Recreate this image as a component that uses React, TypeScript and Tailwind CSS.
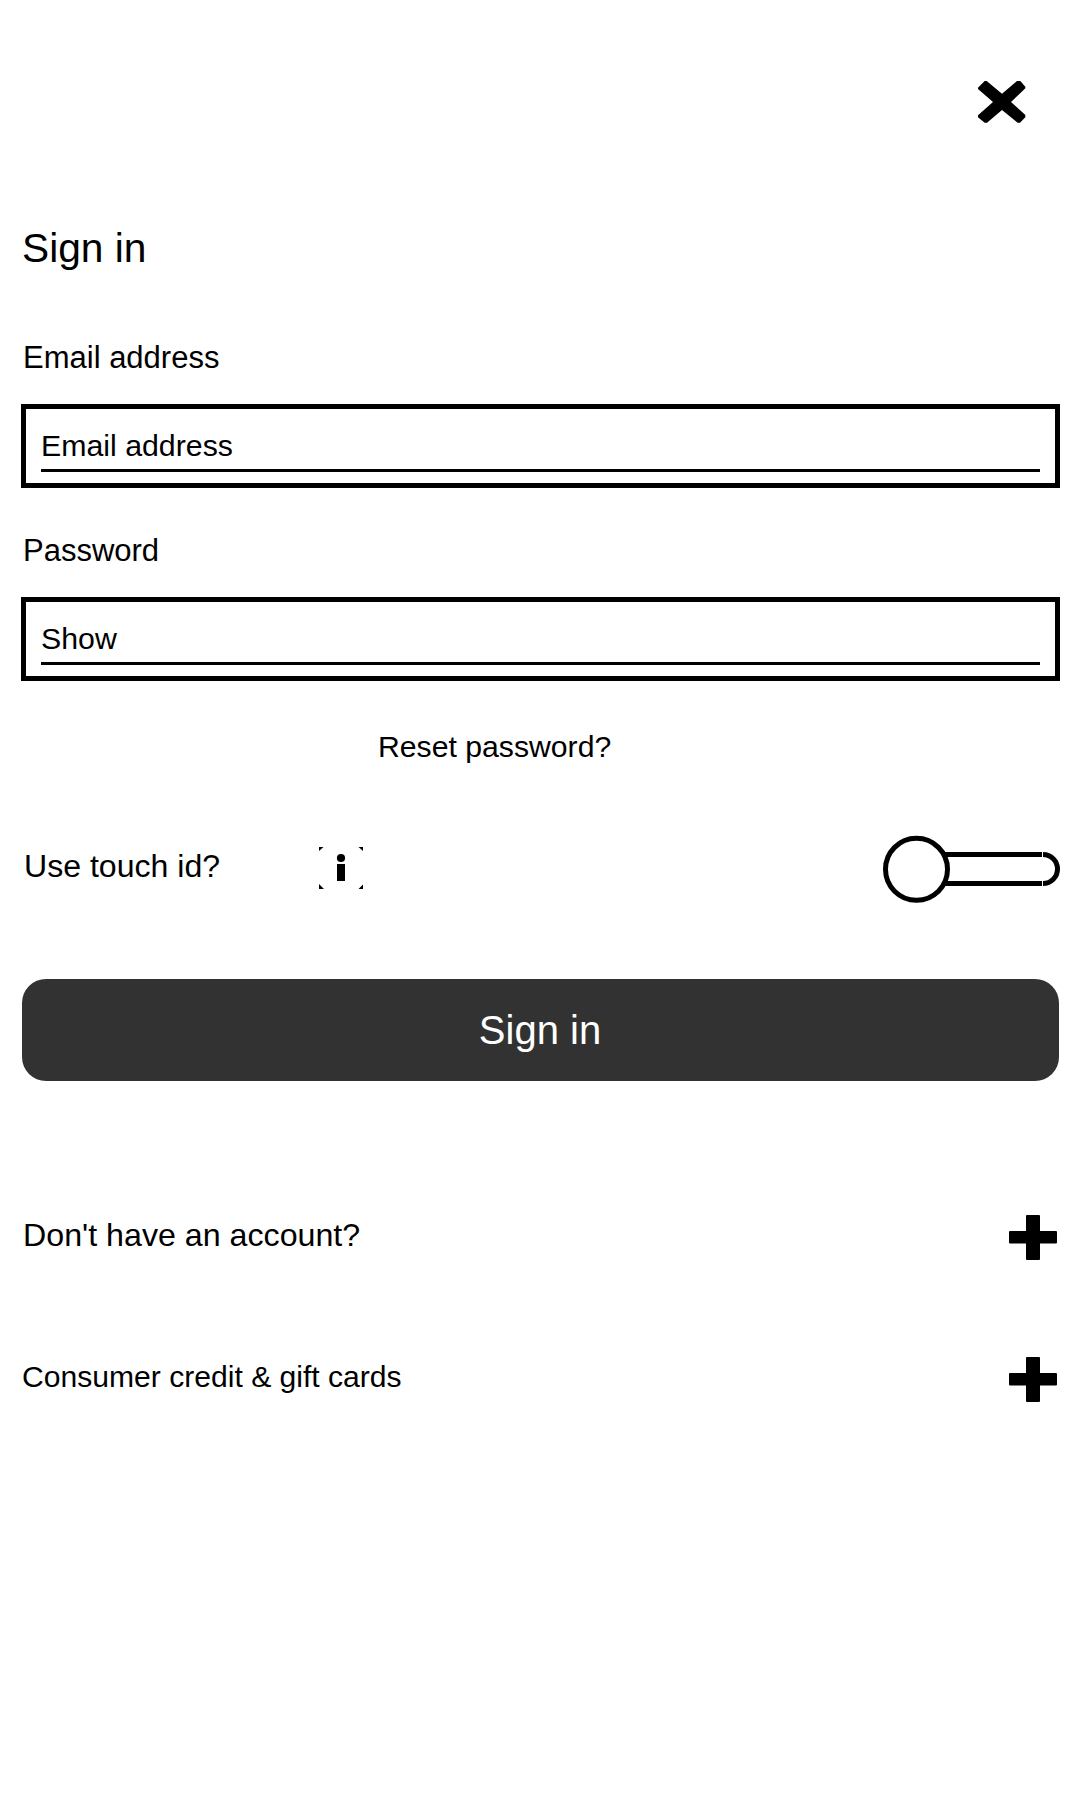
import { useId } from "react";

function CloseIcon() {
  return (
    <svg width="48" height="42" viewBox="53 63 144 126" aria-hidden="true">
      <path d="M53 83L73 63H79L125 101L170 63H180L195 80V85L152 126L195 165V172L179 188H172L125 150L80 188H73L53 172V166L98 126L53 87Z" />
    </svg>
  );
}

function PlusIcon() {
  return (
    <svg width="48" height="45" viewBox="0 0 48 45" aria-hidden="true">
      <rect x="17" width="14" height="45" rx="1" />
      <rect y="16" width="48" height="12.5" rx="1" />
    </svg>
  );
}

function InfoIcon() {
  return (
    <svg width="44" height="42" viewBox="0 0 44 42" aria-hidden="true">
      <path d="M0 0H4.5L0 4ZM44 0H39.5L44 4ZM0 42H5L0 37ZM44 42H39.5L44 37.5Z" />
      <circle cx="22" cy="11" r="4.1" />
      <rect x="18" y="17" width="8" height="17" />
    </svg>
  );
}

function TouchToggle() {
  return (
    <svg width="177" height="68" viewBox="0 0 177 68" fill="none" stroke="black" strokeWidth="5" aria-hidden="true">
      <path d="M62 19.5H159M62 48.5H159" />
      <path d="M160 19.5A14.5 14.5 0 0 1 160 48.5" />
      <circle cx="33.5" cy="34.3" r="31" fill="white" />
    </svg>
  );
}

function Field({ label, placeholder, type }: { label: string; placeholder: string; type: string }) {
  const id = useId();
  return (
    <div className="h-[193px]">
      <label htmlFor={id} className="block h-[67px] pt-px pl-[2px] text-[31px] leading-10">
        {label}
      </label>
      <div className="h-[84px] border-[5px] border-black px-[15px]">
        <input
          id={id}
          type={type}
          placeholder={placeholder}
          className="block h-[63px] w-full border-b-[3px] border-black pt-[13px] text-[30.3px] outline-none placeholder:text-black"
        />
      </div>
    </div>
  );
}

export default function App() {
  return (
    <main className="flex h-[1800px] w-[1080px] flex-col bg-white pr-5 pl-[21px] font-['Liberation_Sans',Arial,sans-serif] text-black">
      <header className="flex h-[223px] justify-end pt-[81px] pr-[34px]">
        <button className="h-[42px]" aria-label="Close">
          <CloseIcon />
        </button>
      </header>
      <h1 className="h-[114px] pl-px text-[40.7px] leading-[50px]">Sign in</h1>
      <Field label="Email address" placeholder="Email address" type="email" />
      <Field label="Password" placeholder="Show" type="password" />
      <a className="ml-[357px] h-[112px] pt-[4px] text-[30.2px] leading-10">Reset password?</a>
      <div className="flex h-[144px]">
        <span className="w-[298px] pt-[11px] pl-[3px] text-[32.1px] leading-10">Use touch id?</span>
        <span className="pt-[12px]">
          <InfoIcon />
        </span>
        <span className="ml-auto">
          <TouchToggle />
        </span>
      </div>
      <button className="mr-px ml-px h-[102px] rounded-3xl bg-[#323232] pr-px text-[40px] leading-[50px] text-white">
        Sign in
      </button>
      <div className="mt-[134px] flex h-[142px] justify-between pr-[3px]">
        <span className="pl-[2px] text-[32.2px] leading-10">Don't have an account?</span>
        <PlusIcon />
      </div>
      <div className="flex justify-between pr-[3px]">
        <span className="pl-px text-[30.1px] leading-10">Consumer credit &amp; gift cards</span>
        <PlusIcon />
      </div>
    </main>
  );
}
